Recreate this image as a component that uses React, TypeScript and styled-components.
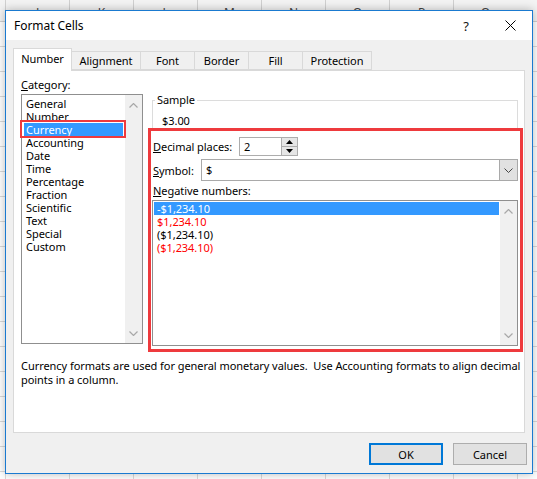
import React, { useState } from "react";
import styled, { createGlobalStyle } from "styled-components";

const GlobalStyle = createGlobalStyle`
  html, body {
    margin: 0;
    padding: 0;
  }
  body {
    width: 537px;
    height: 479px;
    overflow: hidden;
    font-family: "Noto Sans", "Segoe UI", sans-serif;
    font-size: 11px;
    letter-spacing: -0.05px;
    color: #000;
  }
`;

const columns = ["J", "K", "L", "M", "N", "O", "P", "Q"];
const tabList = [
  { name: "Number", width: 59 },
  { name: "Alignment", width: 70 },
  { name: "Font", width: 55 },
  { name: "Border", width: 55 },
  { name: "Fill", width: 55 },
  { name: "Protection", width: 70 },
];
const categories = [
  "General",
  "Number",
  "Currency",
  "Accounting",
  "Date",
  "Time",
  "Percentage",
  "Fraction",
  "Scientific",
  "Text",
  "Special",
  "Custom",
];
const negatives = [
  { text: "-$1,234.10", red: false },
  { text: "$1,234.10", red: true },
  { text: "($1,234.10)", red: false },
  { text: "($1,234.10)", red: true },
];

const Chevron = ({ up }: { up?: boolean }) => (
  <svg width="9" height="5" viewBox="0 0 9 5">
    <polyline
      points={up ? "0.5,4.5 4.5,0.5 8.5,4.5" : "0.5,0.5 4.5,4.5 8.5,0.5"}
      fill="none"
      stroke="#a8a8a8"
      strokeWidth="1.2"
    />
  </svg>
);

const ScrollBar = () => (
  <ScrollTrack>
    <Chevron up />
    <Chevron />
  </ScrollTrack>
);

export default function App() {
  const [tab, setTab] = useState<string>("Number");
  const [category, setCategory] = useState<string>("Currency");
  const [negative, setNegative] = useState<number>(0);

  return (
    <>
      <GlobalStyle />
      <Sheet>
        <HeaderRow>
          {columns.map((c) => (
            <HeaderCell key={c}>{c}</HeaderCell>
          ))}
        </HeaderRow>

        <Dialog>
          <TitleBar>
            <Title>Format Cells</Title>
            <CaptionButton>?</CaptionButton>
            <CaptionButton>
              <svg width="11" height="11" viewBox="0 0 11 11">
                <path d="M0.5 0.5 L10.5 10.5 M10.5 0.5 L0.5 10.5" stroke="#000" strokeWidth="1" />
              </svg>
            </CaptionButton>
          </TitleBar>

          <Body>
            <TabStrip>
              {tabList.map((t) => (
                <Tab
                  key={t.name}
                  $width={t.width}
                  $active={tab === t.name}
                  onClick={() => setTab(t.name)}
                >
                  {t.name}
                </Tab>
              ))}
            </TabStrip>

            <Panel>
              <TopArea>
                <LeftCol>
                  <FieldLabel>
                    <u>C</u>ategory:
                  </FieldLabel>
                  <ListBox $height={250}>
                    <ListItems>
                      {categories.map((c) => (
                        <CategoryItem
                          key={c}
                          $selected={category === c}
                          onClick={() => setCategory(c)}
                        >
                          {c}
                          {category === c && <ItemMark />}
                        </CategoryItem>
                      ))}
                    </ListItems>
                    <ScrollBar />
                  </ListBox>
                </LeftCol>

                <RightCol>
                  <SampleGroup>
                    <Legend>Sample</Legend>
                    <SampleValue>$3.00</SampleValue>
                  </SampleGroup>

                  <FormatSection>
                    <Row>
                      <RowLabel $width={87}>
                        <u>D</u>ecimal places:
                      </RowLabel>
                      <SpinBox>
                        <SpinValue>2</SpinValue>
                        <SpinButtons>
                          <SpinButton>
                            <svg width="7" height="4" viewBox="0 0 7 4">
                              <polygon points="0,4 3.5,0 7,4" fill="#000" />
                            </svg>
                          </SpinButton>
                          <SpinButton>
                            <svg width="7" height="4" viewBox="0 0 7 4">
                              <polygon points="0,0 7,0 3.5,4" fill="#000" />
                            </svg>
                          </SpinButton>
                        </SpinButtons>
                      </SpinBox>
                    </Row>

                    <Row $top={3}>
                      <RowLabel $width={49}>
                        <u>S</u>ymbol:
                      </RowLabel>
                      <ComboBox>
                        <ComboValue>$</ComboValue>
                        <ComboButton>
                          <svg width="9" height="5" viewBox="0 0 9 5">
                            <polyline
                              points="0.5,0.5 4.5,4.5 8.5,0.5"
                              fill="none"
                              stroke="#444"
                              strokeWidth="1"
                            />
                          </svg>
                        </ComboButton>
                      </ComboBox>
                    </Row>

                    <NegLabel>
                      <u>N</u>egative numbers:
                    </NegLabel>
                    <ListBox $height={146}>
                      <ListItems $left={1}>
                        {negatives.map((n, idx) => (
                          <NegItem
                            key={idx}
                            $selected={negative === idx}
                            $red={n.red}
                            onClick={() => setNegative(idx)}
                          >
                            {n.text}
                          </NegItem>
                        ))}
                      </ListItems>
                      <ScrollBar />
                    </ListBox>
                    <SectionMark />
                  </FormatSection>
                </RightCol>
              </TopArea>

              <Description>
                <DescLine>
                  Currency formats are used for general monetary values.{"  "}Use Accounting formats to align decimal
                </DescLine>
                <DescLine>points in a column.</DescLine>
              </Description>
            </Panel>

            <ButtonRow>
              <DialogButton $default>OK</DialogButton>
              <DialogButton>Cancel</DialogButton>
            </ButtonRow>
          </Body>
        </Dialog>
      </Sheet>
    </>
  );
}

const Sheet = styled.div`
  position: relative;
  width: 537px;
  height: 479px;
  overflow: hidden;
  background-color: #ffffff;
  background-image: linear-gradient(to right, #dadada 1px, transparent 1px),
    linear-gradient(to bottom, #dadada 1px, transparent 1px);
  background-size: 64px 100%, 100% 25px;
  background-position: 5px 0, 0 21px;
`;

const HeaderRow = styled.div`
  display: flex;
  height: 21px;
  padding-left: 5px;
  background: #f3f3f3;
  border-bottom: 1px solid #d0d0d0;
`;

const HeaderCell = styled.div`
  flex: 0 0 64px;
  box-sizing: border-box;
  border-left: 1px solid #d0d0d0;
  display: flex;
  align-items: center;
  justify-content: center;
  font-size: 12px;
  color: #444;
  padding-top: 4px;
`;

const Dialog = styled.div`
  position: absolute;
  left: 5px;
  top: 10px;
  width: 528px;
  height: 464px;
  box-sizing: border-box;
  border: 1px solid #1a7ad0;
  background: #f0f0f0;
  display: flex;
  flex-direction: column;
  box-shadow: 0 0 9px rgba(0, 0, 0, 0.28);
`;

const TitleBar = styled.div`
  height: 29px;
  flex: 0 0 29px;
  background: #ffffff;
  display: flex;
  align-items: center;
  padding-left: 8px;
`;

const Title = styled.div`
  flex: 1;
  font-size: 12px;
  padding-bottom: 1px;
`;

const CaptionButton = styled.div`
  width: 44px;
  height: 29px;
  display: flex;
  align-items: center;
  justify-content: center;
  font-size: 13px;
  color: #111;
`;

const Body = styled.div`
  flex: 1;
  display: flex;
  flex-direction: column;
  padding: 8px 7px 8px 7px;
`;

const TabStrip = styled.div`
  display: flex;
  align-items: flex-end;
  height: 22px;
  flex: 0 0 22px;
`;

const Tab = styled.div<{ $width: number; $active: boolean }>`
  position: relative;
  z-index: ${(p) => (p.$active ? 2 : 1)};
  box-sizing: border-box;
  width: ${(p) => p.$width}px;
  height: ${(p) => (p.$active ? 23 : 19)}px;
  margin-bottom: ${(p) => (p.$active ? -1 : 0)}px;
  margin-left: -1px;
  border: 1px solid #d9d9d9;
  border-bottom: ${(p) => (p.$active ? "none" : "1px solid #d9d9d9")};
  background: ${(p) => (p.$active ? "#ffffff" : "#f0f0f0")};
  display: flex;
  align-items: center;
  justify-content: center;
  padding-bottom: ${(p) => (p.$active ? 3 : 0)}px;

  &:first-child {
    margin-left: 0;
  }
`;

const Panel = styled.div`
  box-sizing: border-box;
  height: 363px;
  flex: 0 0 363px;
  background: #ffffff;
  border: 1px solid #d9d9d9;
  display: flex;
  flex-direction: column;
`;

const TopArea = styled.div`
  display: flex;
  align-items: flex-start;
  padding: 7px 0 0 7px;
`;

const LeftCol = styled.div`
  width: 122px;
  display: flex;
  flex-direction: column;
`;

const FieldLabel = styled.div`
  line-height: 14px;
  height: 14px;
  margin-bottom: 2px;
`;

const ListBox = styled.div<{ $height: number }>`
  box-sizing: border-box;
  height: ${(p) => p.$height}px;
  border: 1px solid #8f8f8f;
  background: #ffffff;
  display: flex;
`;

const ListItems = styled.div<{ $left?: number }>`
  flex: 1;
  display: flex;
  flex-direction: column;
  padding: ${(p) => (p.$left !== undefined ? `1px 1px 0 ${p.$left}px` : "2px 2px 0 2px")};
`;

const CategoryItem = styled.div<{ $selected: boolean }>`
  position: relative;
  height: 13px;
  line-height: 13px;
  padding-left: 2px;
  white-space: nowrap;
  background: ${(p) => (p.$selected ? "#3399ff" : "transparent")};
  color: ${(p) => (p.$selected ? "#ffffff" : "#000")};
`;

const ItemMark = styled.span`
  position: absolute;
  top: -3px;
  left: -4px;
  right: -3px;
  bottom: -2px;
  border: 2px solid #ee3a3d;
  pointer-events: none;
`;

const NegItem = styled.div<{ $selected: boolean; $red: boolean }>`
  height: 13px;
  line-height: 13px;
  padding-left: 3px;
  white-space: nowrap;
  background: ${(p) => (p.$selected ? "#3399ff" : "transparent")};
  color: ${(p) => (p.$selected ? "#ffffff" : p.$red ? "#ff0000" : "#000")};
`;

const ScrollTrack = styled.div`
  width: 17px;
  background: #f0f0f0;
  display: flex;
  flex-direction: column;
  align-items: center;
  justify-content: space-between;
  padding: 8px 0 7px;
  box-sizing: border-box;
`;

const RightCol = styled.div`
  width: 366px;
  margin-left: 9px;
  display: flex;
  flex-direction: column;
`;

const SampleGroup = styled.fieldset`
  margin: 15px 0 0 0;
  padding: 7px 0 1px 9px;
  border: 1px solid #dcdcdc;
  min-width: 0;
`;

const Legend = styled.legend`
  padding: 0 2px;
  margin-left: -7px;
  line-height: 14px;
`;

const SampleValue = styled.div`
  line-height: 14px;
`;

const FormatSection = styled.div`
  position: relative;
  margin-top: 7px;
  display: flex;
  flex-direction: column;
`;

const SectionMark = styled.span`
  position: absolute;
  top: -9px;
  left: -4px;
  right: -5px;
  bottom: -6px;
  border: 3px solid #ee3a3d;
  pointer-events: none;
`;

const Row = styled.div<{ $top?: number }>`
  display: flex;
  align-items: center;
  margin-top: ${(p) => p.$top || 0}px;
`;

const RowLabel = styled.div<{ $width: number }>`
  width: ${(p) => p.$width}px;
  padding-left: 1px;
  box-sizing: border-box;
  white-space: nowrap;
`;

const SpinBox = styled.div`
  box-sizing: border-box;
  width: 59px;
  height: 19px;
  border: 1px solid #adadad;
  background: #ffffff;
  display: flex;
`;

const SpinValue = styled.div`
  flex: 1;
  padding-left: 4px;
  line-height: 17px;
`;

const SpinButtons = styled.div`
  width: 15px;
  display: flex;
  flex-direction: column;
  border-left: 1px solid #adadad;
`;

const SpinButton = styled.div`
  flex: 1;
  background: #e6e6e6;
  display: flex;
  align-items: center;
  justify-content: center;

  & + & {
    border-top: 1px solid #adadad;
  }
`;

const ComboBox = styled.div`
  flex: 1;
  box-sizing: border-box;
  height: 22px;
  border: 1px solid #a9a9a9;
  background: #ffffff;
  display: flex;
`;

const ComboValue = styled.div`
  flex: 1;
  padding-left: 4px;
  line-height: 20px;
`;

const ComboButton = styled.div`
  width: 17px;
  background: #e1e1e1;
  border-left: 1px solid #a9a9a9;
  display: flex;
  align-items: center;
  justify-content: center;
`;

const NegLabel = styled.div`
  line-height: 14px;
  padding-left: 1px;
  margin: 3px 0 2px;
`;

const Description = styled.div`
  margin-top: 13px;
  padding-left: 7px;
`;

const DescLine = styled.div`
  line-height: 14px;
  white-space: pre;
`;

const ButtonRow = styled.div`
  display: flex;
  justify-content: flex-end;
  gap: 10px;
  margin-top: 10px;
  margin-right: -2px;
`;

const DialogButton = styled.button<{ $default?: boolean }>`
  box-sizing: border-box;
  width: 74px;
  height: 22px;
  padding: 0;
  font-family: inherit;
  font-size: 11px;
  color: #000;
  background: #e1e1e1;
  border: ${(p) => (p.$default ? "2px solid #0078d7" : "1px solid #adadad")};
  border-radius: 0;
`;
